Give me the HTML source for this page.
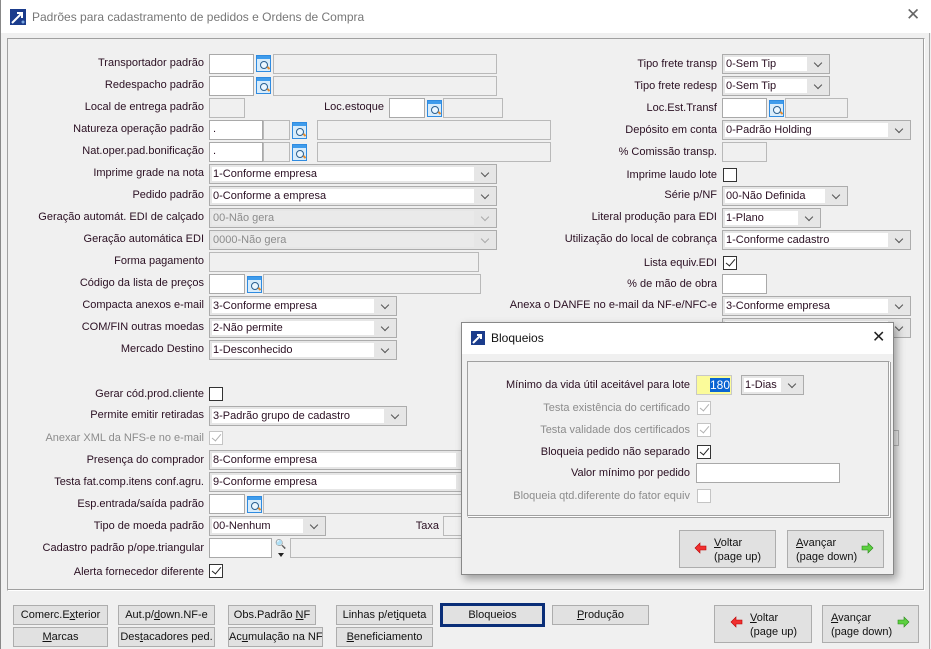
<!DOCTYPE html>
<html><head><meta charset="utf-8"><style>
*{box-sizing:border-box;margin:0;padding:0}
body{width:931px;height:649px;background:#f0f0f0;font-family:"Liberation Sans",sans-serif;font-size:11px;color:#2a0f22;position:relative;overflow:hidden}
.a{position:absolute}
.l{position:absolute;white-space:nowrap;text-align:right;line-height:14px}
.g{color:#8c8c8c}
.in{position:absolute;background:#fff;border:1px solid #a9a9a9;height:20px}
.gr{position:absolute;background:#f0f0f0;border:1px solid #b9b9b9;height:20px}
.cb{position:absolute;background:#e6e6e6;border:1px solid #acacac;height:20px;padding:2px 22px 2px 2px}
.cb span{display:block;background:#fff;height:14px;line-height:14px;padding-left:1px;white-space:nowrap;overflow:hidden}
.cb.d span{background:#eaeaea;color:#8c8c8c}
.cb:after{content:"";position:absolute;right:8px;top:5px;width:5px;height:5px;border-right:1px solid #555;border-bottom:1px solid #555;transform:rotate(45deg)}
.cb.d:after{border-color:#aaa}
.ck{position:absolute;width:14px;height:14px;border:1px solid #333;background:#fff}
.ck.c:after{content:"";position:absolute;left:4px;top:0px;width:4px;height:8px;border-right:1.3px solid #222;border-bottom:1.3px solid #222;transform:rotate(40deg)}
.ck.dis{border-color:#c4c4c4}
.ck.dis:after{border-color:#b0b0b0}
.si{position:absolute;width:15px;height:17px;border:1px solid #2f8be0;background:linear-gradient(#3f9cec 0,#3f9cec 3px,#d8ecfb 3px)}
.si:before{content:"";position:absolute;left:3px;top:5px;width:6px;height:6px;border:1.3px solid #2a5f8f;border-radius:50%;background:#eaf6ff}
.si:after{content:"";position:absolute;left:10px;top:11px;width:3px;height:2px;background:#e58a2a;transform:rotate(45deg)}
.bt{position:absolute;background:#e1e1e1;border:1px solid #adadad;height:20px;text-align:center;line-height:18px;font-size:11px;color:#111;white-space:nowrap}
u{text-decoration:underline}
</style></head><body>
<div class="a" style="left:0;top:0;width:931px;height:33px;background:#fff;border-left:1px solid #888"></div>
<svg class="a" style="left:10px;top:9px" width="16" height="16"><rect width="16" height="16" fill="#1b3c8c"/><path d="M2 14 L12 4 M7 4 H12 V9" stroke="#fff" stroke-width="2" fill="none"/><circle cx="13" cy="13" r="1.5" fill="#7aa7e0"/></svg>
<div class="a" style="left:32px;top:10px;font-size:12px;color:#777">Padrões para cadastramento de pedidos e Ordens de Compra</div>
<div class="a" style="left:906px;top:5px;font-size:17px;color:#666">✕</div>
<div class="a" style="left:0;top:33px;width:1px;height:616px;background:#888"></div>
<div class="a" style="left:929px;top:33px;width:1px;height:616px;background:#aaa"></div>
<div class="a" style="left:7px;top:38px;width:918px;height:553px;border:1px solid #a0a0a0;border-right-color:#fff;border-bottom-color:#fff;box-shadow:inset -1px -1px 0 #a0a0a0"></div>

<div class="l" style="right:727px;top:56px">Transportador padrão</div>
<div class="in" style="left:209px;top:54px;width:45px"></div><div class="si" style="left:256px;top:55px"></div><div class="gr" style="left:273px;top:54px;width:224px"></div>
<div class="l" style="right:727px;top:78px">Redespacho padrão</div>
<div class="in" style="left:209px;top:76px;width:45px"></div><div class="si" style="left:256px;top:77px"></div><div class="gr" style="left:273px;top:76px;width:224px"></div>
<div class="l" style="right:727px;top:100px">Local de entrega padrão</div>
<div class="gr" style="left:209px;top:98px;width:36px"></div>
<div class="l" style="right:547px;top:100px">Loc.estoque</div>
<div class="in" style="left:389px;top:98px;width:36px"></div><div class="si" style="left:427px;top:100px"></div><div class="gr" style="left:443px;top:98px;width:60px"></div>
<div class="l" style="right:727px;top:122px">Natureza operação padrão</div>
<div class="in" style="left:209px;top:120px;width:54px;padding-left:3px;line-height:17px">.</div><div class="gr" style="left:263px;top:120px;width:27px"></div><div class="si" style="left:292px;top:122px"></div><div class="gr" style="left:317px;top:120px;width:234px"></div>
<div class="l" style="right:727px;top:144px">Nat.oper.pad.bonificação</div>
<div class="in" style="left:209px;top:142px;width:54px;padding-left:3px;line-height:17px">.</div><div class="gr" style="left:263px;top:142px;width:27px"></div><div class="si" style="left:292px;top:144px"></div><div class="gr" style="left:317px;top:142px;width:234px"></div>
<div class="l" style="right:727px;top:166px">Imprime grade na nota</div>
<div class="cb" style="left:209px;top:164px;width:288px"><span>1-Conforme empresa</span></div>
<div class="l" style="right:727px;top:188px">Pedido padrão</div>
<div class="cb" style="left:209px;top:186px;width:288px"><span>0-Conforme a empresa</span></div>
<div class="l" style="right:727px;top:210px">Geração automát. EDI de calçado</div>
<div class="cb d" style="left:209px;top:208px;width:288px"><span>00-Não gera</span></div>
<div class="l" style="right:727px;top:232px">Geração automática EDI</div>
<div class="cb d" style="left:209px;top:230px;width:288px"><span>0000-Não gera</span></div>
<div class="l" style="right:727px;top:254px">Forma pagamento</div>
<div class="gr" style="left:209px;top:252px;width:270px"></div>
<div class="l" style="right:727px;top:276px">Código da lista de preços</div>
<div class="in" style="left:209px;top:274px;width:36px"></div><div class="si" style="left:247px;top:276px"></div><div class="gr" style="left:263px;top:274px;width:218px"></div>
<div class="l" style="right:727px;top:298px">Compacta anexos e-mail</div>
<div class="cb" style="left:209px;top:296px;width:188px"><span>3-Conforme empresa</span></div>
<div class="l" style="right:727px;top:320px">COM/FIN outras moedas</div>
<div class="cb" style="left:209px;top:318px;width:188px"><span>2-Não permite</span></div>
<div class="l" style="right:727px;top:342px">Mercado Destino</div>
<div class="cb" style="left:209px;top:340px;width:188px"><span>1-Desconhecido</span></div>
<div class="l" style="right:727px;top:387px">Gerar cód.prod.cliente</div>
<div class="ck" style="left:209px;top:387px"></div>
<div class="l" style="right:727px;top:408px">Permite emitir retiradas</div>
<div class="cb" style="left:209px;top:406px;width:198px"><span>3-Padrão grupo de cadastro</span></div>
<div class="l g" style="right:727px;top:431px">Anexar XML da NFS-e no e-mail</div>
<div class="ck c dis" style="left:209px;top:431px"></div>
<div class="l" style="right:727px;top:453px">Presença do comprador</div>
<div class="cb" style="left:209px;top:450px;width:270px"><span>8-Conforme empresa</span></div>
<div class="l" style="right:727px;top:475px">Testa fat.comp.itens conf.agru.</div>
<div class="cb" style="left:209px;top:472px;width:270px"><span>9-Conforme empresa</span></div>
<div class="l" style="right:727px;top:497px">Esp.entrada/saída padrão</div>
<div class="in" style="left:209px;top:494px;width:36px"></div><div class="si" style="left:247px;top:496px"></div><div class="gr" style="left:263px;top:494px;width:218px"></div>
<div class="l" style="right:727px;top:519px">Tipo de moeda padrão</div>
<div class="cb" style="left:209px;top:516px;width:117px"><span>00-Nenhum</span></div>
<div class="l" style="right:492px;top:519px">Taxa</div>
<div class="gr" style="left:443px;top:516px;width:40px"></div>
<div class="l" style="right:727px;top:541px">Cadastro padrão p/ope.triangular</div>
<div class="in" style="left:209px;top:538px;width:63px"></div>
<div class="a" style="left:275px;top:539px;font-size:9px;color:#2a5f8f">🔍</div>
<div class="a" style="left:278px;top:553px;width:0;height:0;border-left:3px solid transparent;border-right:3px solid transparent;border-top:4px solid #222"></div>
<div class="gr" style="left:290px;top:538px;width:190px"></div>
<div class="l" style="right:727px;top:565px">Alerta fornecedor diferente</div>
<div class="ck c" style="left:209px;top:564px"></div>

<div class="l" style="right:214px;top:57px">Tipo frete transp</div>
<div class="cb" style="left:722px;top:54px;width:108px"><span>0-Sem Tip</span></div>
<div class="l" style="right:214px;top:79px">Tipo frete redesp</div>
<div class="cb" style="left:722px;top:76px;width:108px"><span>0-Sem Tip</span></div>
<div class="l" style="right:214px;top:101px">Loc.Est.Transf</div>
<div class="in" style="left:722px;top:98px;width:45px"></div><div class="si" style="left:769px;top:100px"></div><div class="gr" style="left:785px;top:98px;width:63px"></div>
<div class="l" style="right:214px;top:123px">Depósito em conta</div>
<div class="cb" style="left:722px;top:120px;width:189px"><span>0-Padrão Holding</span></div>
<div class="l" style="right:214px;top:145px">% Comissão transp.</div>
<div class="gr" style="left:722px;top:142px;width:45px"></div>
<div class="l" style="right:214px;top:168px">Imprime laudo lote</div>
<div class="ck" style="left:723px;top:168px"></div>
<div class="l" style="right:214px;top:188px">Série p/NF</div>
<div class="cb" style="left:722px;top:186px;width:126px"><span>00-Não Definida</span></div>
<div class="l" style="right:214px;top:210px">Literal produção para EDI</div>
<div class="cb" style="left:722px;top:208px;width:99px"><span>1-Plano</span></div>
<div class="l" style="right:214px;top:232px">Utilização do local de cobrança</div>
<div class="cb" style="left:722px;top:230px;width:189px"><span>1-Conforme cadastro</span></div>
<div class="l" style="right:214px;top:256px">Lista equiv.EDI</div>
<div class="ck c" style="left:723px;top:256px"></div>
<div class="l" style="right:214px;top:277px">% de mão de obra</div>
<div class="in" style="left:722px;top:274px;width:45px"></div>
<div class="l" style="right:214px;top:298px">Anexa o DANFE no e-mail da NF-e/NFC-e</div>
<div class="cb" style="left:722px;top:296px;width:189px"><span>3-Conforme empresa</span></div>
<div class="cb" style="left:722px;top:318px;width:189px"><span></span></div>
<div class="gr" style="left:885px;top:430px;width:14px;height:16px"></div>

<div class="bt" style="left:13px;top:605px;width:95px">Comerc.E<u>x</u>terior</div>
<div class="bt" style="left:118px;top:605px;width:97px">Aut.p/<u>d</u>own.NF-e</div>
<div class="bt" style="left:228px;top:605px;width:88px">Obs.Padrão <u>N</u>F</div>
<div class="bt" style="left:336px;top:605px;width:97px">Linhas p/et<u>i</u>queta</div>
<div class="bt" style="left:440px;top:603px;width:105px;height:24px;border:3px solid #0a2e78;line-height:18px">Bloqueios</div>
<div class="bt" style="left:552px;top:605px;width:97px"><u>P</u>rodução</div>
<div class="bt" style="left:13px;top:627px;width:95px"><u>M</u>arcas</div>
<div class="bt" style="left:118px;top:627px;width:97px">Des<u>t</u>acadores ped.</div>
<div class="bt" style="left:228px;top:627px;width:95px">Ac<u>u</u>mulação na NF</div>
<div class="bt" style="left:336px;top:627px;width:97px"><u>B</u>eneficiamento</div>
<div class="bt" style="left:714px;top:605px;width:98px;height:38px;line-height:14px;padding:5px 0 0 35px;text-align:left"><u>V</u>oltar<br>(page up)</div>
<svg class="a" style="left:730px;top:616px" width="13" height="12"><path d="M1 6 L6 1 V4 H12 V8 H6 V11 Z" fill="#f03030" stroke="#b00" stroke-width=".6"/></svg>
<div class="bt" style="left:822px;top:605px;width:97px;height:38px;line-height:14px;padding:5px 0 0 8px;text-align:left"><u>A</u>vançar<br>(page down)</div>
<svg class="a" style="left:897px;top:616px" width="13" height="12"><path d="M12 6 L7 1 V4 H1 V8 H7 V11 Z" fill="#5cd040" stroke="#2a8a1a" stroke-width=".6"/></svg>

<div class="a" style="left:461px;top:322px;width:433px;height:253px;background:#f0f0f0;border:1px solid #888;box-shadow:3px 4px 8px rgba(0,0,0,.35)"></div>
<div class="a" style="left:462px;top:323px;width:431px;height:31px;background:#fff"></div>
<svg class="a" style="left:471px;top:331px" width="14" height="14"><rect width="14" height="14" fill="#1b3c8c"/><path d="M2 12 L10 4 M6 4 H10 V8" stroke="#fff" stroke-width="2" fill="none"/></svg>
<div class="a" style="left:491px;top:331px;font-size:12px;color:#111">Bloqueios</div>
<div class="a" style="left:872px;top:327px;font-size:16px;color:#222">✕</div>
<div class="a" style="left:467px;top:361px;width:423px;height:156px;border:1px solid #a0a0a0;border-right-color:#fff;border-bottom-color:#fff;box-shadow:inset -1px -1px 0 #a0a0a0, 1px 1px 0 #a0a0a0"></div>
<div class="l" style="right:241px;top:378px">Mínimo da vida útil aceitável para lote</div>
<div class="a" style="left:696px;top:375px;width:36px;height:20px;background:#fbfb9a;border:1px solid #c8c8c8"></div>
<div class="a" style="left:710px;top:378px;width:20px;height:14px;background:#0a64d2;color:#fff;line-height:14px;font-size:12px;text-align:center">180</div>
<div class="cb" style="left:741px;top:375px;width:63px"><span>1-Dias</span></div>
<div class="l g" style="right:241px;top:401px">Testa existência do certificado</div>
<div class="ck c dis" style="left:697px;top:401px"></div>
<div class="l g" style="right:241px;top:423px">Testa validade dos certificados</div>
<div class="ck c dis" style="left:697px;top:423px"></div>
<div class="l" style="right:241px;top:445px">Bloqueia pedido não separado</div>
<div class="ck c" style="left:697px;top:445px"></div>
<div class="l" style="right:241px;top:466px">Valor mínimo por pedido</div>
<div class="in" style="left:696px;top:463px;width:144px"></div>
<div class="l g" style="right:241px;top:489px">Bloqueia qtd.diferente do fator equiv</div>
<div class="ck dis" style="left:697px;top:489px"></div>
<div class="bt" style="left:679px;top:530px;width:97px;height:38px;line-height:14px;padding:5px 0 0 34px;text-align:left"><u>V</u>oltar<br>(page up)</div>
<svg class="a" style="left:694px;top:542px" width="13" height="12"><path d="M1 6 L6 1 V4 H12 V8 H6 V11 Z" fill="#f03030" stroke="#b00" stroke-width=".6"/></svg>
<div class="bt" style="left:787px;top:530px;width:97px;height:38px;line-height:14px;padding:5px 0 0 8px;text-align:left"><u>A</u>vançar<br>(page down)</div>
<svg class="a" style="left:861px;top:542px" width="13" height="12"><path d="M12 6 L7 1 V4 H1 V8 H7 V11 Z" fill="#5cd040" stroke="#2a8a1a" stroke-width=".6"/></svg>
</body></html>
